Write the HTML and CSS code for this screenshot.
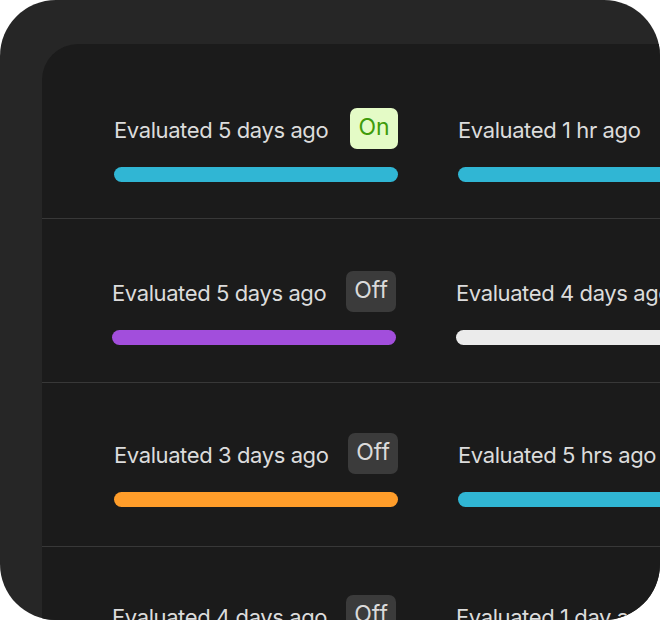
FILE: index.html
```html
<!DOCTYPE html>
<html>
<head>
<meta charset="utf-8">
<link rel="stylesheet" href="styles.css">
</head>
<body>
<div class="frame">
  <div class="panel">
    <div class="row first">
      <div class="cell">
        <div class="head"><span class="label">Evaluated 5 days ago</span><span class="badge on">On</span></div>
        <div class="bar cyan"></div>
      </div>
      <div class="cell wide">
        <div class="head"><span class="label">Evaluated 1 hr ago</span></div>
        <div class="bar cyan"></div>
      </div>
    </div>
    <div class="row second">
      <div class="cell">
        <div class="head"><span class="label">Evaluated 5 days ago</span><span class="badge off">Off</span></div>
        <div class="bar purple"></div>
      </div>
      <div class="cell wide">
        <div class="head"><span class="label">Evaluated 4 days ago</span></div>
        <div class="bar white"></div>
      </div>
    </div>
    <div class="row third">
      <div class="cell">
        <div class="head"><span class="label">Evaluated 3 days ago</span><span class="badge off">Off</span></div>
        <div class="bar orange"></div>
      </div>
      <div class="cell wide">
        <div class="head"><span class="label">Evaluated 5 hrs ago</span></div>
        <div class="bar cyan"></div>
      </div>
    </div>
    <div class="row fourth">
      <div class="cell">
        <div class="head"><span class="label">Evaluated 4 days ago</span><span class="badge off">Off</span></div>
        <div class="bar cyan"></div>
      </div>
      <div class="cell wide">
        <div class="head"><span class="label">Evaluated 1 day ago</span></div>
        <div class="bar cyan"></div>
      </div>
    </div>
  </div>
</div>
</body>
</html>
```
FILE: styles.css
```css
html, body {
  margin: 0;
  padding: 0;
  background: #ffffff;
}
body {
  width: 660px;
  height: 620px;
  overflow: hidden;
  font-family: "Inter", "Liberation Sans", sans-serif;
}
.frame {
  width: 660px;
  height: 620px;
  background: #262626;
  border-radius: 56px;
  overflow: hidden;
  padding: 44px 0 0 42px;
  box-sizing: border-box;
}
.panel {
  width: 700px;
  height: 700px;
  background: #1b1b1b;
  border-top-left-radius: 36px;
  padding-top: 12px;
  box-sizing: border-box;
}
.row {
  display: flex;
  gap: 60px;
  padding: 52px 0 0 72px;
  height: 164px;
  box-sizing: border-box;
  border-top: 1px solid #383838;
}
.row.first {
  border-top: none;
  height: 162px;
}
.row.second {
  padding-left: 70px;
}
.row.third {
  padding-top: 50px;
  padding-left: 72px;
}
.row.fourth {
  padding-top: 48px;
  padding-left: 70px;
}
.cell {
  width: 284px;
  flex: none;
  display: flex;
  flex-direction: column;
  gap: 18px;
}
.cell.wide {
  width: 400px;
}
.head {
  height: 41px;
  display: flex;
  align-items: center;
  justify-content: space-between;
}
.label {
  color: #dcdcdc;
  font-size: 22px;
  letter-spacing: -0.4px;
  padding-top: 2px;
  white-space: nowrap;
}
.badge {
  height: 41px;
  min-width: 48px;
  box-sizing: border-box;
  padding: 0 8px 3px;
  border-radius: 7px;
  display: flex;
  align-items: center;
  justify-content: center;
  font-size: 23px;
}
.badge.on {
  background: #e4fbc6;
  color: #3f9b0b;
}
.badge.off {
  background: #3b3b3b;
  color: #dadada;
}
.bar {
  height: 15px;
  border-radius: 8px;
}
.cyan { background: #30b6d4; }
.purple { background: #a24edc; }
.orange { background: #ff9d2a; }
.white { background: #ebebeb; }
```
